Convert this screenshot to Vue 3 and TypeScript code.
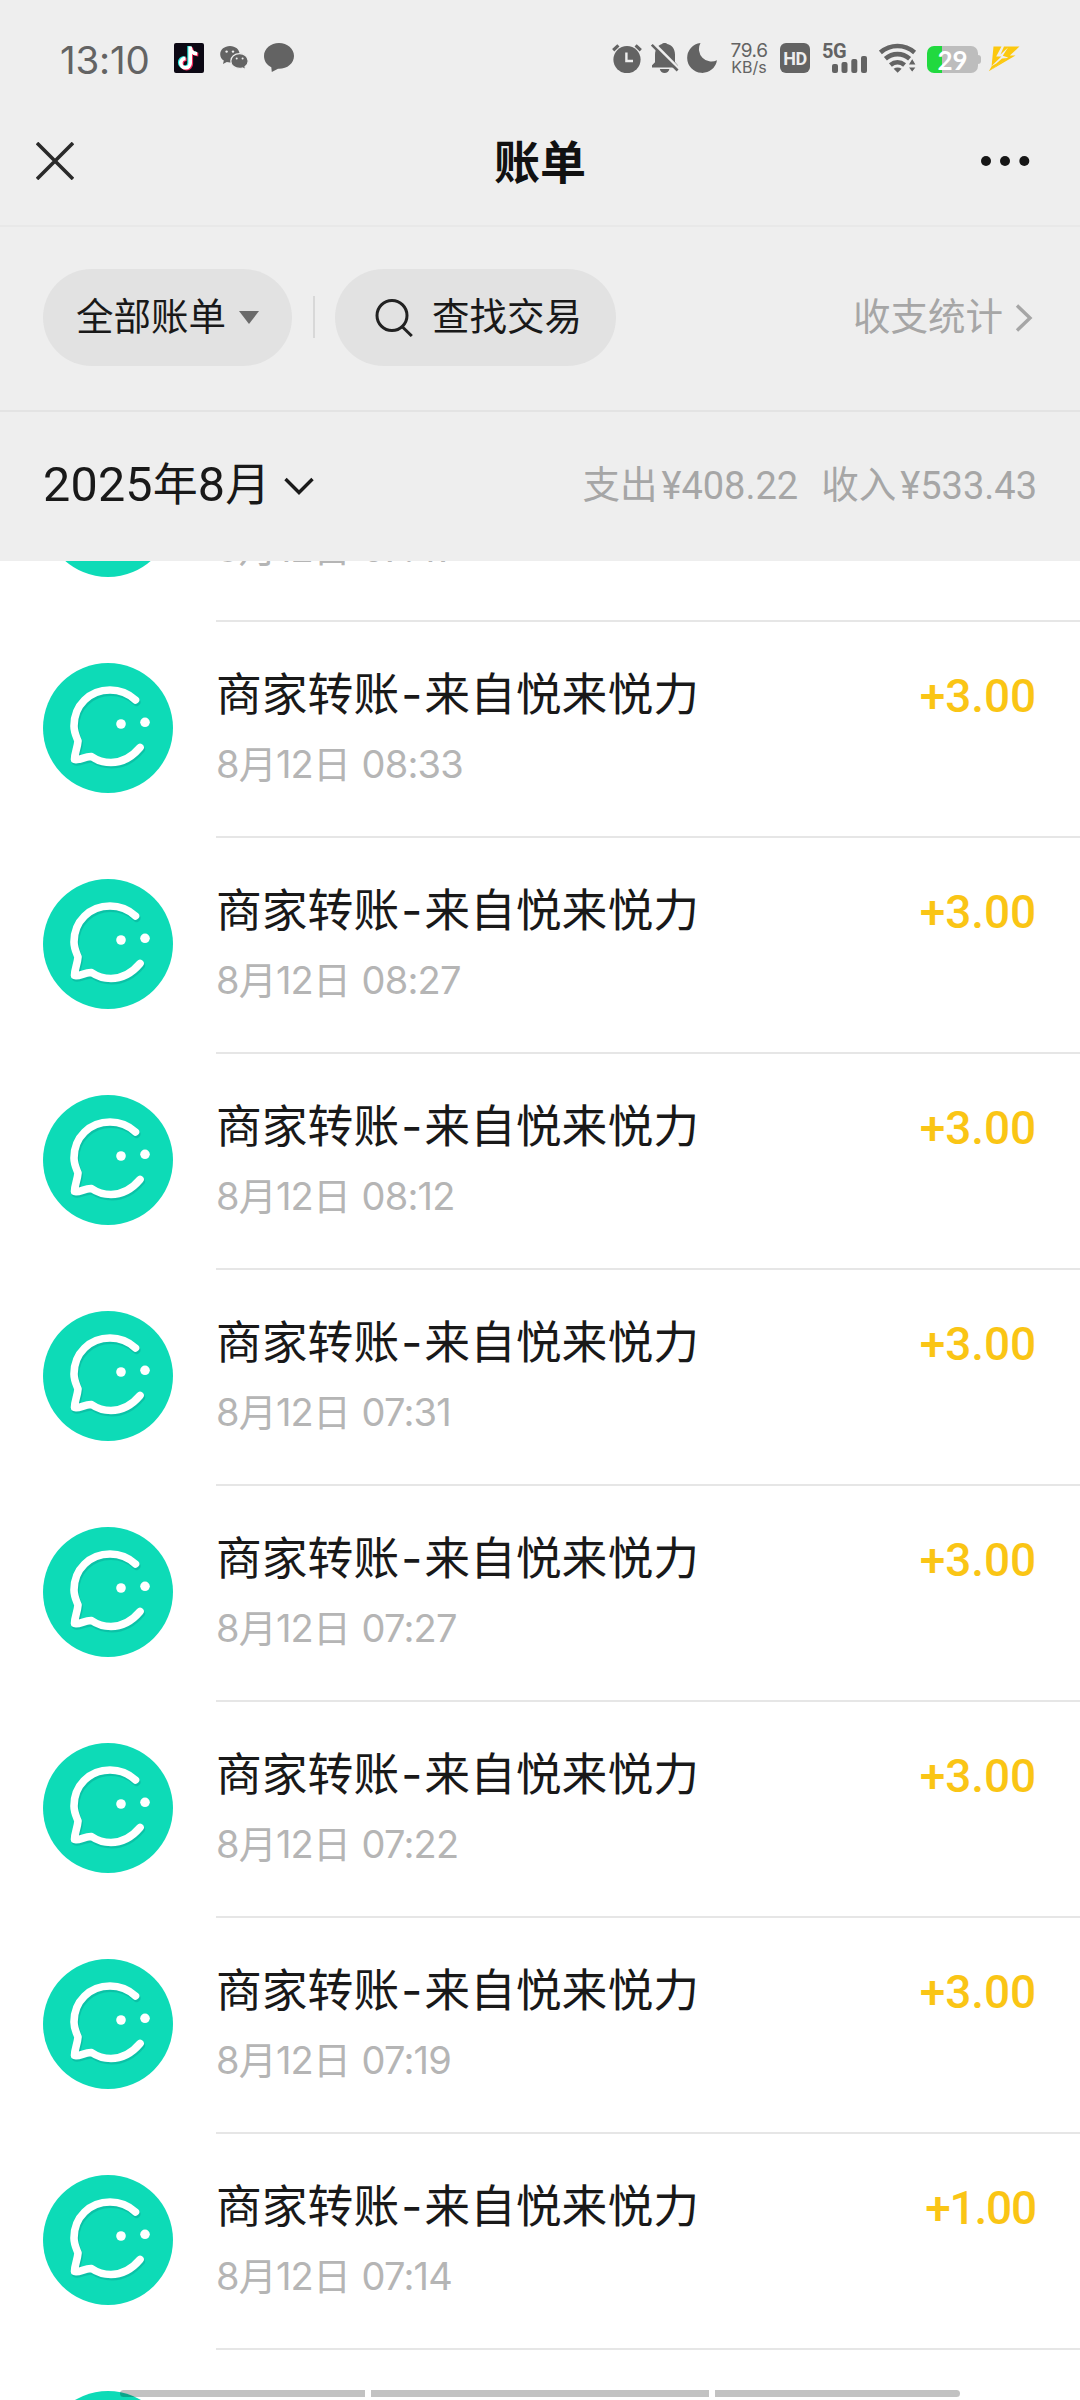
<script setup lang="ts">
interface Bill {
  payer: string
  time: string
  amount: string
}

const make = (time: string, amount = '+3.00'): Bill => ({
  payer: '来自悦来悦力',
  time,
  amount,
})

const bills: Bill[] = [
  make('07:47'),
  make('08:33'),
  make('08:27'),
  make('08:12'),
  make('07:31'),
  make('07:27'),
  make('07:22'),
  make('07:19'),
  make('07:14', '+1.00'),
  make('07:10'),
]

const bubblePath =
  'M92.500 37C85 30 77 27 67 27C47 27 31 42 31 63C31 69 33 73 35 78C34.500 85 31.500 90 31.500 96.500C36 98 42 93 48.500 93.500C55 98 61 99.500 68 99.500C80 99.500 89 94 97 84.500'
</script>

<template>
  <div class="screen">
    <header class="status">
      <span class="clock">13:10</span>
      <svg class="ic tiktok" width="30" height="30" viewBox="0 0 30 30">
        <rect width="30" height="30" rx="2" fill="#0c0814" />
        <g fill="none" stroke-width="3.600">
          <path d="M16 3.500V20a4.700 4.700 0 1 1-4.700-4.700M16 4.500c.4 3.600 3 6 7 6.200" stroke="#25e8e0" transform="translate(-.9 -.6)" />
          <path d="M16 3.500V20a4.700 4.700 0 1 1-4.700-4.700M16 4.500c.4 3.600 3 6 7 6.200" stroke="#f5285a" transform="translate(1.300 .9)" />
          <path d="M16 3.500V20a4.700 4.700 0 1 1-4.700-4.700M16 4.500c.4 3.600 3 6 7 6.200" stroke="#fff" transform="translate(.2 .1)" />
        </g>
      </svg>
      <svg class="ic wechat" width="29" height="26" viewBox="0 0 29 26">
        <path d="M10 1C4.500 1 .2 4.600.2 9.200c0 2.700 1.400 4.900 3.600 6.400L3 19l3.800-2c1 .3 2 .4 3.200.4 5.400 0 9.600-3.600 9.600-8.200S15.400 1 10 1z" fill="#636363" />
        <path d="M19.600 8.600c-5 0-8.800 3.200-8.800 7.400s3.800 7.400 8.800 7.400c1 0 2-.2 2.900-.4l3.300 1.800-.8-3c2-1.400 3.200-3.400 3.200-5.800 0-4.200-3.800-7.400-8.600-7.400z" fill="#636363" stroke="#eee" stroke-width="1.200" />
        <g fill="#eee"><circle cx="6.600" cy="6.600" r="1.200" /><circle cx="13" cy="6.600" r="1.200" /><circle cx="16.700" cy="13.600" r="1" /><circle cx="22.600" cy="13.600" r="1" /></g>
      </svg>
      <svg class="ic bubble" width="30" height="30" viewBox="0 0 30 30">
        <path d="M15 0C6.700 0 0 5.700 0 13c0 5 2.800 9 7.300 11.300L7.800 29l6.200-3.200c9 .4 16-5.400 16-12.800C30 5.700 23.300 0 15 0z" fill="#636363" />
      </svg>
      <span class="grow"></span>
      <svg class="ic alarm" width="30" height="30" viewBox="0 0 30 30">
        <circle cx="15" cy="16.600" r="13.600" fill="#636363" />
        <path d="M1.200 7.200l5.200-4.800M28.800 7.200l-5.200-4.800" stroke="#636363" stroke-width="3.200" />
        <path d="M14.400 9.600v8.400h6.600" fill="none" stroke="#eee" stroke-width="2.400" />
      </svg>
      <svg class="ic bell" width="28" height="30" viewBox="0 0 28 30">
        <path d="M1 24.500v-2.200l3-3V12C4 5.500 7.500 1.800 11 1c.8-1.300 4.400-1.300 5.200 0C21 2 24 6 24 11.500V19l3 3.500v2z" fill="#636363" />
        <path d="M8.800 26h9.600c-.6 2.500-2.400 4-4.800 4s-4.200-1.500-4.800-4z" fill="#636363" />
        <path d="M2.600 .2L29 26.800" stroke="#eee" stroke-width="3" />
        <path d="M.8 1.800L26.600 27.500" stroke="#636363" stroke-width="2.600" />
      </svg>
      <svg class="ic moon" width="30" height="30" viewBox="0 0 30 30">
        <path d="M13.500 0A15 15 0 1 0 30 17.200 12.500 12.500 0 0 1 13.500 0z" fill="#636363" />
      </svg>
      <span class="speed"><b>79.6</b><i>KB/s</i></span>
      <span class="hd">HD</span>
      <span class="cell">
        <span class="g5">5G</span>
        <svg width="36" height="17" viewBox="0 0 36 17" fill="#636363">
          <rect x="0" y="8" width="6" height="9" rx="2" /><rect x="9.500" y="6" width="6" height="11" rx="2" />
          <rect x="19.300" y="3" width="6" height="14" rx="2" /><rect x="29" y="0" width="6" height="17" rx="2" />
        </svg>
      </span>
      <svg class="ic wifi" width="38" height="30" viewBox="0 0 38 30">
        <g fill="none" stroke="#636363" stroke-width="4.600">
          <path d="M1.400 9.400C11.500 .8 25.500.8 35.600 9.400" />
          <path d="M6.400 15.800c7.200-6.200 17-6.200 24.200 0" />
          <path d="M11.400 22c4.400-3.500 9.800-3.500 14.200 0" />
        </g>
        <path d="M14.600 25.800c2.400-1.800 5.600-1.800 8 0l-4 4z" fill="#636363" />
        <path d="M29 22l4.200-7 4.200 7zM29 24h8.400l-4.200 5.500z" fill="#636363" stroke="#eee" stroke-width="1.200" />
      </svg>
      <span class="battery"><span class="pct">29</span></span>
      <svg class="ic bolt" width="32" height="26" viewBox="0 0 32 26">
        <path d="M5.500 .5h8L8.200 10.400h5.200L3.600 20z" fill="#fcc80e" />
        <path d="M16 .5h15.500L21.800 9.600h5.700L.8 25.200 20 11.600l-5.200-1.800L20 1.500 12.500 8.500z" fill="#fcc80e" />
        <path d="M14 12.500l6-.6L.8 25.200l3-5.200 4.500-2.500z" fill="#fcc80e" />
      </svg>
    </header>

    <nav class="navbar">
      <svg width="38" height="38" viewBox="0 0 38 38"><path d="M1 1l36 36M37 1L1 37" stroke="#2a2a2a" stroke-width="3.600" /></svg>
      <h1>账单</h1>
      <svg width="50" height="12" viewBox="0 0 50 12" fill="#161616"><circle cx="6" cy="6" r="5" /><circle cx="25" cy="6" r="5" /><circle cx="44.300" cy="6" r="5" /></svg>
    </nav>

    <section class="filters">
      <button class="pill all">全部账单<span class="tri"></span></button>
      <span class="sep"></span>
      <button class="pill find">
        <svg width="38" height="38" viewBox="0 0 38 38" fill="none" stroke="#222" stroke-width="3"><circle cx="17" cy="16.500" r="15" /><path d="M27 27.500l9.800 9.500" /></svg>
        查找交易
      </button>
      <span class="grow"></span>
      <a class="stats">收支统计
        <svg width="18" height="28" viewBox="0 0 18 28" fill="none" stroke="#a6a6a6" stroke-width="3.400"><path d="M2 1.500L15 14 2 26.500" /></svg>
      </a>
    </section>

    <section class="summary">
      <span class="month"><em>2025</em><b>年</b><em>8</em><b>月</b></span>
      <svg class="down" width="30" height="18" viewBox="0 0 30 18" fill="none" stroke="#1a1a1a" stroke-width="3.400"><path d="M1.500 2L15 15.500 28.500 2" /></svg>
      <span class="grow"></span>
      <span class="total"><b>支出</b><em>¥408.22</em></span>
      <span class="total income"><b>收入</b><em>¥533.43</em></span>
    </section>

    <main class="viewport">
      <ul class="list">
        <li v-for="(b, i) in bills" :key="i" class="bill">
          <svg class="avatar" width="130" height="130" viewBox="0 0 130 130">
            <circle cx="65" cy="65" r="65" fill="#0ddbb7" />
            <path :d="bubblePath" transform="translate(1 2)" opacity=".16" fill="none" stroke="#045" stroke-width="8" stroke-linecap="round" stroke-linejoin="round" />
            <path :d="bubblePath" fill="none" stroke="#fff" stroke-width="7.600" stroke-linecap="round" stroke-linejoin="round" />
            <circle cx="78" cy="61" r="4.800" fill="#fff" /><circle cx="102" cy="59.300" r="4.800" fill="#fff" />
          </svg>
          <div class="body">
            <div class="texts">
              <div class="title">商家转账<span class="dash">-</span>{{ b.payer }}</div>
              <div class="date">8月12日 {{ b.time }}</div>
            </div>
            <div class="amount" :class="{ narrow: b.amount.includes('1') }">{{ b.amount }}</div>
          </div>
        </li>
      </ul>
    </main>

    <div class="gesture"><span class="side"></span><span class="mid"></span><span class="side"></span></div>
  </div>
</template>

<style>
body {
  margin: 0;
  background: #fff;
}
</style>

<style scoped>
.screen {
  position: relative;
  width: 1080px;
  height: 2400px;
  overflow: hidden;
  display: flex;
  flex-direction: column;
  background: #fff;
  color: #191919;
  font-family: Roboto, 'Noto Sans CJK SC', sans-serif;
}
svg {
  display: block;
  flex: none;
}
em, i, b {
  font-style: normal;
  font-weight: 400;
}
.grow {
  flex: 1;
}
.status {
  box-sizing: border-box;
  flex: none;
  height: 110px;
  padding: 43px 60px 0 60px;
  display: flex;
  align-items: flex-start;
  background: #eee;
  color: #636363;
}
.clock {
  width: 114px;
  font: 400 38.500px/34px Inter, sans-serif;
  letter-spacing: -0.2px;
}
.wechat {
  margin: 2px 0 0 16px;
}
.bubble {
  margin-left: 15px;
}
.bell {
  margin-left: 9px;
}
.moon {
  margin-left: 8px;
}
.speed {
  width: 40px;
  margin: -1px 11px 0 12px;
  display: flex;
  flex-direction: column;
  align-items: center;
}
.speed b {
  font: 400 19px/17px Inter, sans-serif;
  letter-spacing: -0.4px;
}
.speed i {
  font: 400 16px/16px Inter, sans-serif;
}
.hd {
  width: 30px;
  height: 30px;
  border-radius: 6px;
  background: #636363;
  color: #eee;
  font: 700 18px/31px Roboto, sans-serif;
  text-align: center;
  letter-spacing: -0.5px;
}
.cell {
  width: 46px;
  margin-left: 12px;
}
.g5 {
  display: block;
  height: 13px;
  font: 700 20px/17px Roboto, sans-serif;
  letter-spacing: -0.5px;
}
.cell svg {
  margin-left: 10px;
}
.wifi {
  margin-left: 11px;
}
.battery {
  position: relative;
  width: 51px;
  height: 27px;
  margin: 3px 0 0 10px;
  border-radius: 7px;
  background: linear-gradient(90deg, #21d93f 15px, #bdbdbd 15px);
}
.battery::after {
  content: '';
  position: absolute;
  left: 51px;
  top: 9px;
  width: 3px;
  height: 9px;
  border-radius: 0 3px 3px 0;
  background: #bdbdbd;
}
.pct {
  display: block;
  text-align: center;
  color: #fff;
  font: 700 26px/28px Lato, sans-serif;
}
.bolt {
  margin: 3px 0 0 10px;
}
.navbar {
  box-sizing: border-box;
  flex: none;
  height: 117px;
  padding: 0 50px 14px 36px;
  display: flex;
  align-items: center;
  justify-content: space-between;
  background: #eee;
  border-bottom: 2px solid #e8e8e8;
}
.navbar h1 {
  margin: 5px 0 0 26px;
  font-size: 46px;
  line-height: 60px;
  font-weight: 700;
  color: #111;
}
.filters {
  box-sizing: border-box;
  flex: none;
  height: 185px;
  padding: 42px 47px 0 43px;
  display: flex;
  align-items: flex-start;
  background: #eee;
  border-bottom: 2px solid #e3e3e3;
}
.pill {
  box-sizing: border-box;
  height: 97px;
  padding: 0 0 7px 33px;
  border: 0;
  border-radius: 49px;
  background: #e2e2e2;
  color: #191919;
  display: flex;
  align-items: center;
  font: 400 37.500px/56px 'Noto Sans CJK SC', sans-serif;
}
.all {
  width: 249px;
}
.tri {
  margin: 7px 0 0 13px;
  border: 10px solid transparent;
  border-top: 13px solid #6b6b6b;
  border-bottom: 0;
}
.sep {
  width: 2px;
  height: 42px;
  margin: 27px 20px 0 21px;
  background: #d8d8d8;
}
.find {
  width: 281px;
  padding-left: 40px;
}
.find svg {
  margin: 7px 19px 0 0;
}
.stats {
  height: 90px;
  display: flex;
  align-items: center;
  color: #a6a6a6;
  font: 400 37.500px/56px 'Noto Sans CJK SC', sans-serif;
}
.stats svg {
  margin: 7px 0 0 12px;
}
.summary {
  box-sizing: border-box;
  flex: none;
  height: 149px;
  padding: 0 43px 2px 43px;
  display: flex;
  align-items: center;
  background: #eee;
}
.month,
.total {
  display: flex;
  align-items: baseline;
}
.month b {
  font-size: 45px;
  line-height: 66px;
}
.month em {
  font-size: 48.500px;
  line-height: 66px;
  letter-spacing: 0.2px;
}
.down {
  margin: 1px 0 0 14px;
}
.total {
  color: #a6a6a6;
  font-size: 37.500px;
  line-height: 56px;
}
.total b {
  position: relative;
  top: -1px;
}
.total em {
  margin-left: 4px;
  font-size: 38px;
}
.income {
  margin-left: 23px;
}
.viewport {
  flex: 1;
  min-height: 0;
  overflow: hidden;
}
.list {
  margin: -156px 0 0;
  padding: 0;
  list-style: none;
}
.bill {
  height: 216px;
  display: flex;
}
.avatar {
  margin: 42px 43px 0;
}
.body {
  box-sizing: border-box;
  flex: 1;
  height: 217px;
  padding: 40px 44px 0 0;
  display: flex;
  justify-content: space-between;
  border-bottom: 2px solid #e6e6e6;
}
.title {
  font: 400 45.800px/60px 'Noto Sans CJK SC', sans-serif;
  white-space: nowrap;
}
.dash {
  display: inline-block;
  width: 25px;
  font-family: Inter, sans-serif;
  text-align: center;
}
.date {
  margin-top: 12px;
  color: #b5b5b5;
  font: 400 38px/54px Inter, 'Noto Sans CJK SC', sans-serif;
  letter-spacing: -0.8px;
  word-spacing: 1.500px;
}
.amount {
  margin-top: 5px;
  color: #fac515;
  font: 500 46px/60px Roboto, sans-serif;
  letter-spacing: -0.1px;
}
.narrow {
  letter-spacing: -1.200px;
}
.gesture {
  position: absolute;
  left: 120px;
  top: 2390px;
  display: flex;
  gap: 6px;
}
.gesture span {
  height: 7px;
  background: rgba(0, 0, 0, 0.24);
}
.side {
  width: 245px;
}
.mid {
  width: 338px;
}
.side:first-child {
  border-radius: 4px 0 0 4px;
}
.side:last-child {
  border-radius: 0 4px 4px 0;
}
</style>
